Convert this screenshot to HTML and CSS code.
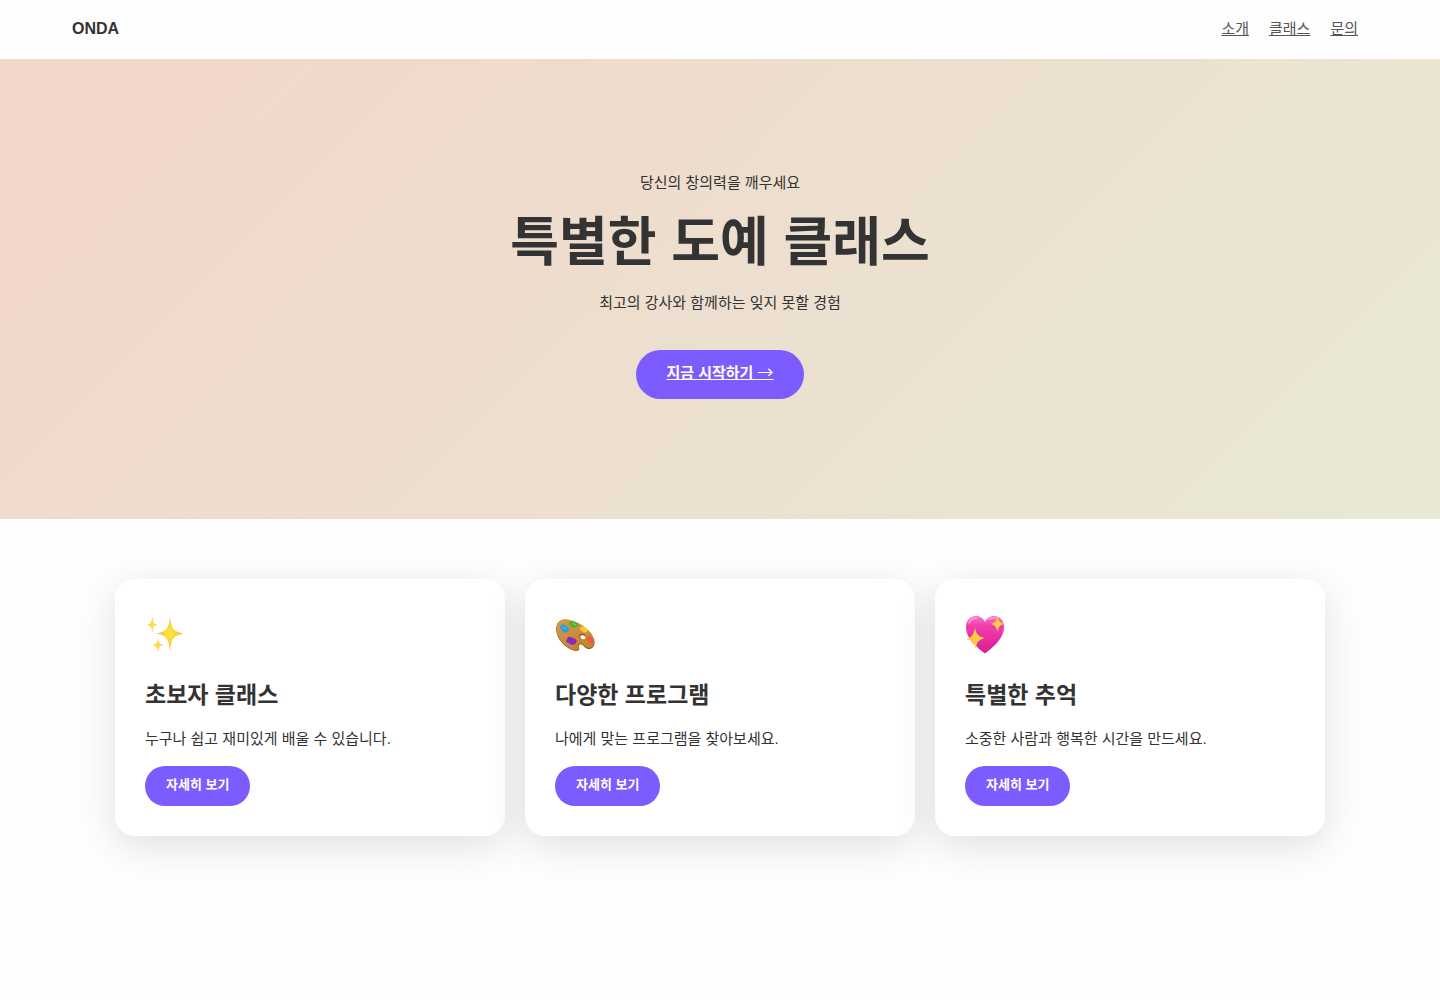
FILE: index.html
```
<!DOCTYPE html>
<html lang="ko">
<head>
    <meta charset="UTF-8">
    <meta name="viewport" content="width=device-width, initial-scale=1.0">
    <title>ONDA</title>
    <link rel="stylesheet" href="styles.css">
</head>
<body>
    <header class="header">
        <div class="logo">ONDA</div>
        <nav class="nav">
            <a href="#about">소개</a>
            <a href="#classes">클래스</a>
            <a href="#contact">문의</a>
        </nav>
    </header>

    <section class="hero" id="about">
        <p>당신의 창의력을 깨우세요</p>
        <h1>특별한 도예 클래스</h1>
        <p>최고의 강사와 함께하는 잊지 못할 경험</p>
        <a href="#classes" class="cta">지금 시작하기 <span class="arrow">→</span></a>
    </section>

    <section class="cards" id="classes">
        <div class="card">
            <svg class="icon" viewBox="0 0 40 40" aria-hidden="true">
                <defs>
                    <radialGradient id="star">
                        <stop offset="0" stop-color="#ffe63c"/>
                        <stop offset="0.5" stop-color="#fdd03c"/>
                        <stop offset="1" stop-color="#f3a04c"/>
                    </radialGradient>
                </defs>
                <g fill="url(#star)">
                    <path d="M25 1.500C26 13 28.500 17 38.500 18.500C28.500 20 26 24.500 25 36.500C24 24.500 21.500 20 11.500 18.500C21.500 17 24 13 25 1.500Z"/>
                    <path d="M7.200 1.500C7.800 7.500 8.500 9 12.500 9.700C8.500 10.400 7.800 12 7.200 18C6.600 12 5.900 10.400 2 9.700C5.900 9 6.600 7.500 7.200 1.500Z"/>
                    <path d="M13 22.500C13.500 28 14.500 29.400 18.500 30C14.500 30.600 13.500 32.500 13 38C12.500 32.500 11.500 30.600 7.500 30C11.500 29.400 12.500 28 13 22.500Z"/>
                </g>
            </svg>
            <h3>초보자 클래스</h3>
            <p>누구나 쉽고 재미있게 배울 수 있습니다.</p>
            <button type="button">자세히 보기</button>
        </div>
        <div class="card">
            <svg class="icon" viewBox="0 0 40 40" aria-hidden="true">
                <defs>
                    <linearGradient id="wood" x1="0" y1="0" x2="0.600" y2="1">
                        <stop offset="0" stop-color="#d59a4c"/>
                        <stop offset="1" stop-color="#c5832f"/>
                    </linearGradient>
                </defs>
                <path fill="#8f5a20" d="M1.500 11C3 5 9 3.500 16 6C26 8.500 37 16 39.300 25C40.500 31 37.500 34.500 33 34C29 33.500 28 28.500 25 29.500C22.500 30.500 25.500 34 23.500 35.500C19 37.500 9 32 4.500 24.500C1.500 19.500 .500 15 1.500 11Z"/>
                <path fill="url(#wood)" d="M1.800 10.500C3.500 4.500 9 3 16 5.200C26 7.800 36.500 15.500 38.700 24.500C40 30 36.500 33.500 33 33C29.500 32.500 28 27.500 24.500 28.500C22 29.500 25 33 23 34.700C19 36.500 9.500 31 5 24C2 19 1 14.500 1.800 10.500Z"/>
                <ellipse cx="27.500" cy="21.500" rx="3.200" ry="2.500" fill="#835020" transform="rotate(15 27.500 21.500)"/>
                <ellipse cx="27.800" cy="22.200" rx="2.700" ry="1.900" fill="#fff" transform="rotate(15 27.800 22.200)"/>
                <path fill="#279fd7" d="M6 10C8.500 8 10.500 11 13 12C15 14 14 17 11.500 17.500C9 18 7 16.500 6.500 14.500C4.500 13 4.500 11 6 10Z"/>
                <path fill="#43b932" d="M15 6.500C17 5 20 7 22 8C24 9.500 22.500 12.500 19.500 12.500C17 12.500 16.500 11 14.500 10.500C13.500 9 14 7.500 15 6.500Z"/>
                <path fill="#f4cd2b" d="M26 12C28.500 10.500 30 12.500 32 14C33.500 16 32 18 29 17.500C27.500 17 27 15.500 25.500 15C24.500 14 25 13 26 12Z"/>
                <path fill="#ec5746" d="M33 22C35 20.500 36.500 23 38 24.500C39 26.500 37.500 28 36 28C34 28 33.500 26.500 32.500 25.500C31 24 31.500 23 33 22Z"/>
                <path fill="#842abd" d="M12.500 23C14.500 20 17 23 19.500 23.500C22 24.500 22.300 27 20.500 28.700C18.500 30.500 16 30 14.300 28.500C13 27.500 11 27.500 11 26.200C12 25.500 11.500 24.500 12.500 23Z"/>
                <path fill="none" stroke="#69cbee" d="M8 12L11 14"/>
                <path fill="none" stroke="#8ade58" d="M18 8.500L21 10"/>
            </svg>
            <h3>다양한 프로그램</h3>
            <p>나에게 맞는 프로그램을 찾아보세요.</p>
            <button type="button">자세히 보기</button>
        </div>
        <div class="card">
            <svg class="icon" viewBox="0 0 40 40" aria-hidden="true">
                <defs>
                    <linearGradient id="heart" x1="0" y1="0" x2="0" y2="1">
                        <stop offset="0" stop-color="#fb75c7"/>
                        <stop offset="0.250" stop-color="#f23fae"/>
                        <stop offset="1" stop-color="#d91c91"/>
                    </linearGradient>
                </defs>
                <path fill="url(#heart)" d="M20 38.500C14 34 1 24 1 12.500C1 5 5.500 1 11 1C15 1 18.500 3.500 20 7C21.500 3.500 25 1 29 1C34.500 1 39 5 39 12.500C39 24 26 34 20 38.500Z"/>
                <path fill="none" stroke="#ff9ddb" stroke-width="1.500" stroke-linecap="round" d="M4 8C5.500 4 8.500 3 12 3.300M24 4.500C26 3 28.500 2.800 31 3.300"/>
                <path fill="#fdce42" d="M32.500 .500C33.500 6 34.500 7.200 39 8.700C34.500 10.500 33.500 11.500 32.500 17C31.500 11.500 30 10.500 26 9C30.500 7.500 31.500 6 32.500 .500Z"/>
                <path fill="#fdce42" d="M10 13C11.500 20 13.500 21.500 20 23C13.500 25 12 26.500 10.500 34C9 26.500 7.500 25.500 1 24C7 22 8.500 20 10 13Z"/>
            </svg>
            <h3>특별한 추억</h3>
            <p>소중한 사람과 행복한 시간을 만드세요.</p>
            <button type="button">자세히 보기</button>
        </div>
    </section>
</body>
</html>
```

FILE: styles.css
```
* {
    box-sizing: border-box;
}
body {
    margin: 0;
    font-family: "Liberation Sans", "Noto Sans CJK KR", sans-serif;
    font-size: 15px;
    line-height: 20px;
    color: #333;
    background-color: #fefefe;
}
h1, h3, p {
    margin: 0;
}

.header {
    display: flex;
    justify-content: space-between;
    align-items: center;
    padding: 19px 5% 20px;
}
.logo {
    font-size: 16px;
    font-weight: bold;
}
.nav {
    display: flex;
}
.nav a {
    margin: 0 10px;
    color: #555;
}

.hero {
    padding: 114px 20px 120px;
    text-align: center;
    background: linear-gradient(135deg, #f3d6ca, #eddfcf 50%, #e8e9d4);
}
.hero h1 {
    margin: 18px 0;
    font-size: 53px;
    line-height: 64px;
}
.cta {
    display: inline-block;
    margin-top: 37px;
    padding: 13px 30px 16px;
    border-radius: 30px;
    background-color: #7c5cff;
    color: white;
    font-weight: bold;
    vertical-align: top;
}
.arrow {
    font-family: "Noto Sans CJK KR", sans-serif;
    font-size: 16px;
    font-weight: normal;
    line-height: 1;
}

.cards {
    display: grid;
    grid-template-columns: repeat(auto-fit, minmax(300px, 1fr));
    gap: 20px;
    max-width: 1250px;
    margin: 0 auto;
    padding: 60px 20px;
}
.card {
    padding: 30px;
    border-radius: 20px;
    background-color: white;
    box-shadow: 0 10px 40px rgba(0, 0, 0, 0.12);
}
.icon {
    display: block;
    width: 40px;
    height: 40px;
    margin: 6px 0 25px;
}
.card h3 {
    margin-bottom: 19px;
    font-size: 23px;
    line-height: 30px;
}
.card p {
    margin-bottom: 17px;
}
button {
    padding: 9px 21px 11px;
    border: none;
    border-radius: 20px;
    background-color: #7c5cff;
    color: white;
    font-family: inherit;
    font-size: 13px;
    font-weight: bold;
    line-height: 20px;
    cursor: pointer;
}
```
